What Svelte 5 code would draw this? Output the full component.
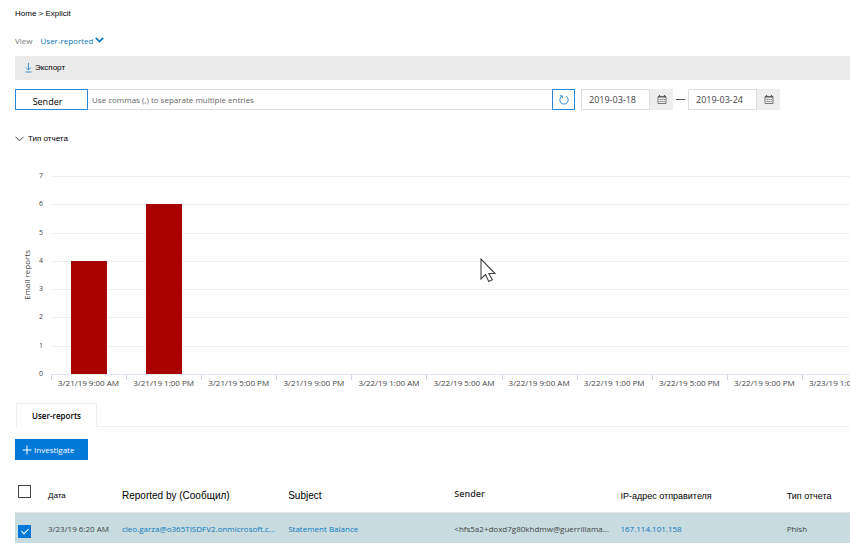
<script>
  const ticks = [7, 6, 5, 4, 3, 2, 1, 0];
  const maxValue = 7;
  const series = [
    { label: '3/21/19 9:00 AM', value: 4 },
    { label: '3/21/19 1:00 PM', value: 6 },
    { label: '3/21/19 5:00 PM', value: 0 },
    { label: '3/21/19 9:00 PM', value: 0 },
    { label: '3/22/19 1:00 AM', value: 0 },
    { label: '3/22/19 5:00 AM', value: 0 },
    { label: '3/22/19 9:00 AM', value: 0 },
    { label: '3/22/19 1:00 PM', value: 0 },
    { label: '3/22/19 5:00 PM', value: 0 },
    { label: '3/22/19 9:00 PM', value: 0 },
    { label: '3/23/19 1:00 AM', value: 0 }
  ];
  let sender = $state('');
  let from = $state('2019-03-18');
  let to = $state('2019-03-24');
  let all = $state(false);
  let picked = $state(true);
</script>

{#snippet calendar()}
  <svg width="10" height="9" viewBox="0 0 10 9" aria-hidden="true">
    <path d="M1 1.500h8v7H1z" fill="#eee" stroke="#777" />
    <path d="M1 2h8M2.500 0v2M7.500 0v2" stroke="#555" stroke-width="1.200" />
    <path d="M2.500 4.500h5.500M2.500 6.500h5.500" stroke="#777" stroke-dasharray="1.300 .7" />
  </svg>
{/snippet}

<main>
  <nav aria-label="Breadcrumb"><a href="#home">Home</a> &gt; <a href="#explicit">Explicit</a></nav>

  <div class="view">
    <label for="view">View</label>
    <select id="view"><option>User-reported</option></select>
    <svg width="9" height="6" viewBox="0 0 9 6" aria-hidden="true"><path d="M.8.800 4.500 4.500 8.200.8" fill="none" stroke="#0a78bd" stroke-width="1.700" /></svg>
  </div>

  <div class="toolbar">
    <button class="export">
      <svg width="7" height="10" viewBox="0 0 7 10" aria-hidden="true"><path d="M3.500 0v7M1 4.500 3.500 7 6 4.500M.5 9h6" fill="none" stroke="#3c8fd0" /></svg>
      Экспорт
    </button>
  </div>

  <form class="filters" onsubmit={(e) => e.preventDefault()}>
    <button type="button" class="field">Sender</button>
    <input class="query" aria-label="Sender" placeholder="Use commas (,) to separate multiple entries" bind:value={sender} />
    <button class="refresh" aria-label="Refresh">
      <svg width="12" height="12" viewBox="0 0 12 12" aria-hidden="true"><path d="M4 2.200A4.200 4.200 0 1 0 8 2.200M1.800 1.800H4.300V4.300" fill="none" stroke="#2b88d8" /></svg>
    </button>
    <input class="date" aria-label="Start date" bind:value={from} />
    <button type="button" class="cal" aria-label="Pick start date">{@render calendar()}</button>
    <span class="dash"></span>
    <input class="date" aria-label="End date" bind:value={to} />
    <button type="button" class="cal" aria-label="Pick end date">{@render calendar()}</button>
  </form>

  <button class="section">
    <svg width="9" height="6" viewBox="0 0 9 6" aria-hidden="true"><path d="M.5.800 4.500 4.800 8.500.8" fill="none" stroke="#444" /></svg>
    Тип отчета
  </button>

  <section class="chart" aria-label="Email reports">
    <div class="title"><span>Email reports</span></div>
    <div class="ticks">
      {#each ticks as tick}<span>{tick}</span>{/each}
    </div>
    <div class="area">
      <div class="plot">
        {#each ticks.slice(1) as tick (tick)}<div class="line"></div>{/each}
        <div class="bars">
          {#each series as point}
            <div class="slot"><div class="bar" style="height: {(point.value / maxValue) * 100}%"></div></div>
          {/each}
        </div>
      </div>
      <div class="labels">
        {#each series as point}<span>{point.label}</span>{/each}
      </div>
    </div>
    <svg class="pointer" width="17" height="26" viewBox="0 0 17 26" aria-hidden="true"><path d="M1 1v20l4.500-4.500 3.300 7 3.500-1.700-3.500-6.300H15z" fill="#fff" stroke="#444" stroke-width="1.100" /></svg>
  </section>

  <div class="tabs"><button class="tab">User-reports</button></div>

  <button class="investigate">
    <svg width="10" height="10" viewBox="0 0 10 10" aria-hidden="true"><path d="M5 .5v9M.5 5h9" stroke="#fff" /></svg>
    Investigate
  </button>

  <table>
    <colgroup><col class="c-check" /><col class="c-date" /><col class="c" /><col class="c" /><col class="c" /><col class="c" /><col /></colgroup>
    <thead>
      <tr>
        <th><input type="checkbox" aria-label="Select all" bind:checked={all} /></th>
        <th class="small">Дата</th>
        <th>Reported by (Сообщил)</th>
        <th>Subject</th>
        <th class="strong">Sender</th>
        <th class="medium">IP-адрес отправителя</th>
        <th class="medium">Тип отчета</th>
      </tr>
    </thead>
    <tbody>
      <tr>
        <td><input type="checkbox" aria-label="Select report" bind:checked={picked} /></td>
        <td class="when">3/23/19 6:20 AM</td>
        <td><a href="#reporter">cleo.garza@o365TISDFV2.onmicrosoft.c...</a></td>
        <td><a href="#subject">Statement Balance</a></td>
        <td>&lt;hfs5a2+doxd7g80khdmw@guerrillama...</td>
        <td><a href="#ip">167.114.101.158</a></td>
        <td>Phish</td>
      </tr>
    </tbody>
  </table>
</main>

<style>
  :global(body) { margin: 0; background: #fff; }
  main {
    padding: 8px 0 8px 15px;
    font: 8px/12px "Open Sans", "Noto Sans", sans-serif;
    color: #444;
    overflow: hidden;
  }
  button, input, select { font: inherit; color: inherit; box-sizing: border-box; margin: 0; }
  button { border: 0; background: none; padding: 0; display: flex; align-items: center; }
  a { text-decoration: none; color: #0a78bd; }
  svg { flex: none; display: block; }

  nav { color: #000; font-family: "Liberation Sans", Arial, sans-serif; }
  nav a { color: inherit; }

  .view { display: flex; align-items: center; margin-top: 15px; height: 12px; color: #777; }
  select { appearance: none; border: 0; background: none; padding: 0; margin-left: 8px; color: #0a78bd; }
  .view svg { margin: -2px 0 0 2px; }

  .toolbar { display: flex; margin-top: 9px; height: 24px; padding-left: 10px; background: #eaeaea; }
  .export { gap: 3px; color: #000; font-family: "Liberation Sans", Arial, sans-serif; }

  .filters { display: flex; align-items: stretch; height: 21px; margin: 9px 70px 0 0; }
  .field {
    width: 73px; justify-content: center; padding: 4px 8px 0 0; border: 1px solid #2b88d8;
    color: #000; font-size: 9px;
  }
  .query { flex: 1; min-width: 0; border: 1px solid #ddd; border-width: 1px 0; padding: 0 4px; }
  .query::placeholder { color: #666; opacity: 1; }
  .refresh { width: 23px; justify-content: center; border: 1px solid #2b88d8; margin-right: 6px; }
  .date { width: 69px; border: 1px solid #ddd; padding: 1px 7px 0; font-size: 9px; }
  .cal { width: 23px; justify-content: center; background: #eee; }
  .dash { width: 9px; height: 1px; margin: 0 3px; background: #555; align-self: center; }

  .section { gap: 4px; margin-top: 23px; color: #000; font: 8px/12px "Liberation Sans", Arial, sans-serif; }

  .chart { position: relative; display: flex; margin-top: 31px; font-size: 7px; line-height: 10px; }
  .title { width: 20px; height: 198px; display: flex; align-items: center; justify-content: center; padding-left: 3px; box-sizing: border-box; }
  .title span { writing-mode: vertical-rl; transform: rotate(180deg); font-size: 8px; }
  .ticks { width: 8px; height: 208px; margin-top: -5px; display: flex; flex-direction: column; justify-content: space-between; text-align: right; }
  .area { flex: 1; min-width: 0; margin-left: 8px; overflow: hidden; }
  .plot { position: relative; height: 198px; display: flex; flex-direction: column; border-bottom: 1px solid #dfe5f2; }
  .line { flex: 1; border-top: 1px solid #eee; box-sizing: border-box; }
  .bars { position: absolute; inset: 0; display: flex; }
  .slot { flex: 0 0 9.4%; display: flex; align-items: flex-end; justify-content: center; }
  .bar { width: 48%; background: #a80000; }
  .labels { display: flex; font-size: 8px; }
  .labels span { flex: 0 0 9.4%; box-sizing: border-box; height: 13px; padding-top: 3px; text-align: center; white-space: nowrap; background: linear-gradient(#ccd6eb, #ccd6eb) left top / 1px 5px no-repeat; }
  .pointer { position: absolute; left: 465px; top: 82px; }

  .tabs { display: flex; margin-top: 15px; border-bottom: 1px solid #eee; padding-left: 1px; }
  .tab { height: 24px; width: 81px; justify-content: center; border: 1px solid #eee; border-bottom: 0; margin-bottom: -1px; background: #fff; color: #000; font-weight: 600; }

  .investigate { width: 73px; height: 21px; margin-top: 12px; padding-left: 7px; gap: 2px; background: #0078d7; color: #fff; }

  table { width: 100%; margin-top: 17px; table-layout: fixed; border-collapse: collapse; }
  .c-check { width: 33px; }
  .c-date { width: 74px; }
  .c { width: 19.9%; }
  th, td { padding: 4px 0 0; text-align: left; white-space: nowrap; box-sizing: border-box; }
  th { height: 35px; color: #000; font: 10px/12px "Liberation Sans", Arial, sans-serif; }
  thead th { border-bottom: 1px solid #e4e4e4; }
  th.small { font-size: 8px; }
  th.medium { font-size: 9px; }
  th.strong { padding: 0; font: 600 9px/12px "Open Sans", sans-serif; color: #333; }
  td { height: 31px; padding-top: 2px; background: #c8dce0; }
  th:first-child { padding: 0 0 6px 3px; }
  td:first-child { padding: 7px 0 0 3px; }
  input[type="checkbox"] { appearance: none; display: block; position: relative; width: 13px; height: 13px; border: 1px solid #444; background: #fff; }
  input[type="checkbox"]:checked { border-color: #0078d7; background: #0078d7; }
  input[type="checkbox"]:checked::after {
    content: ""; position: absolute; left: 4px; top: 1px; width: 3px; height: 6px;
    border: solid #fff; border-width: 0 1px 1px 0; transform: rotate(45deg);
  }
</style>
